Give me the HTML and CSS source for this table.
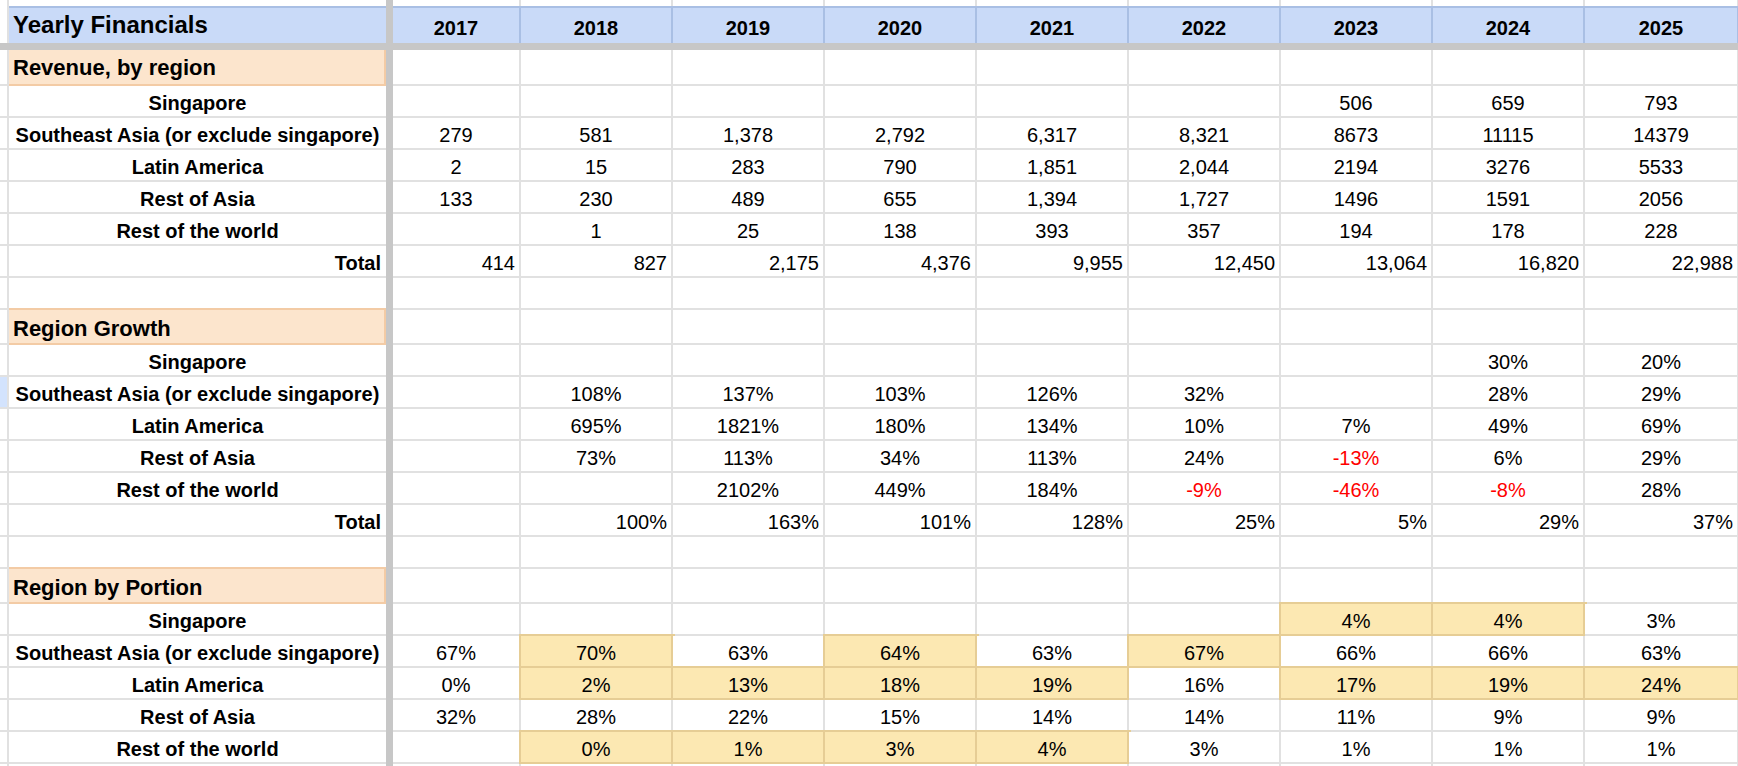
FILE: index.html
```html
<!DOCTYPE html>
<html lang="en">
<head>
<meta charset="utf-8">
<title>Yearly Financials</title>
<link rel="stylesheet" href="styles.css">
</head>
<body>
<div class="sheet">
  <div class="row r0"><div class="c c0"></div><div class="c lab"></div><div class="sep"></div><div class="c y17"></div><div class="c y"></div><div class="c y"></div><div class="c y"></div><div class="c y"></div><div class="c y"></div><div class="c y"></div><div class="c y"></div><div class="c y25"></div></div>
  <div class="row hd"><div class="c c0"></div><div class="c lab">Yearly Financials</div><div class="sep"></div><div class="c y17">2017</div><div class="c y">2018</div><div class="c y">2019</div><div class="c y">2020</div><div class="c y">2021</div><div class="c y">2022</div><div class="c y">2023</div><div class="c y">2024</div><div class="c y25">2025</div></div>
  <div class="hsep"></div>

  <div class="row t first"><div class="c c0"></div><div class="c lab ttl">Revenue, by region</div><div class="sep"></div><div class="c y17"></div><div class="c y"></div><div class="c y"></div><div class="c y"></div><div class="c y"></div><div class="c y"></div><div class="c y"></div><div class="c y"></div><div class="c y25"></div></div>
  <div class="row n"><div class="c c0"></div><div class="c lab">Singapore</div><div class="sep"></div><div class="c y17"></div><div class="c y"></div><div class="c y"></div><div class="c y"></div><div class="c y"></div><div class="c y"></div><div class="c y">506</div><div class="c y">659</div><div class="c y25">793</div></div>
  <div class="row n"><div class="c c0"></div><div class="c lab">Southeast Asia (or exclude singapore)</div><div class="sep"></div><div class="c y17">279</div><div class="c y">581</div><div class="c y">1,378</div><div class="c y">2,792</div><div class="c y">6,317</div><div class="c y">8,321</div><div class="c y">8673</div><div class="c y">11115</div><div class="c y25">14379</div></div>
  <div class="row n"><div class="c c0"></div><div class="c lab">Latin America</div><div class="sep"></div><div class="c y17">2</div><div class="c y">15</div><div class="c y">283</div><div class="c y">790</div><div class="c y">1,851</div><div class="c y">2,044</div><div class="c y">2194</div><div class="c y">3276</div><div class="c y25">5533</div></div>
  <div class="row n"><div class="c c0"></div><div class="c lab">Rest of Asia</div><div class="sep"></div><div class="c y17">133</div><div class="c y">230</div><div class="c y">489</div><div class="c y">655</div><div class="c y">1,394</div><div class="c y">1,727</div><div class="c y">1496</div><div class="c y">1591</div><div class="c y25">2056</div></div>
  <div class="row n"><div class="c c0"></div><div class="c lab">Rest of the world</div><div class="sep"></div><div class="c y17"></div><div class="c y">1</div><div class="c y">25</div><div class="c y">138</div><div class="c y">393</div><div class="c y">357</div><div class="c y">194</div><div class="c y">178</div><div class="c y25">228</div></div>
  <div class="row n tot"><div class="c c0"></div><div class="c lab">Total</div><div class="sep"></div><div class="c y17">414</div><div class="c y">827</div><div class="c y">2,175</div><div class="c y">4,376</div><div class="c y">9,955</div><div class="c y">12,450</div><div class="c y">13,064</div><div class="c y">16,820</div><div class="c y25">22,988</div></div>
  <div class="row n"><div class="c c0"></div><div class="c lab"></div><div class="sep"></div><div class="c y17"></div><div class="c y"></div><div class="c y"></div><div class="c y"></div><div class="c y"></div><div class="c y"></div><div class="c y"></div><div class="c y"></div><div class="c y25"></div></div>

  <div class="row t"><div class="c c0"></div><div class="c lab ttl">Region Growth</div><div class="sep"></div><div class="c y17"></div><div class="c y"></div><div class="c y"></div><div class="c y"></div><div class="c y"></div><div class="c y"></div><div class="c y"></div><div class="c y"></div><div class="c y25"></div></div>
  <div class="row n"><div class="c c0"></div><div class="c lab">Singapore</div><div class="sep"></div><div class="c y17"></div><div class="c y"></div><div class="c y"></div><div class="c y"></div><div class="c y"></div><div class="c y"></div><div class="c y"></div><div class="c y">30%</div><div class="c y25">20%</div></div>
  <div class="row n"><div class="c c0 sel"></div><div class="c lab">Southeast Asia (or exclude singapore)</div><div class="sep"></div><div class="c y17"></div><div class="c y">108%</div><div class="c y">137%</div><div class="c y">103%</div><div class="c y">126%</div><div class="c y">32%</div><div class="c y"></div><div class="c y">28%</div><div class="c y25">29%</div></div>
  <div class="row n"><div class="c c0"></div><div class="c lab">Latin America</div><div class="sep"></div><div class="c y17"></div><div class="c y">695%</div><div class="c y">1821%</div><div class="c y">180%</div><div class="c y">134%</div><div class="c y">10%</div><div class="c y">7%</div><div class="c y">49%</div><div class="c y25">69%</div></div>
  <div class="row n"><div class="c c0"></div><div class="c lab">Rest of Asia</div><div class="sep"></div><div class="c y17"></div><div class="c y">73%</div><div class="c y">113%</div><div class="c y">34%</div><div class="c y">113%</div><div class="c y">24%</div><div class="c y neg">-13%</div><div class="c y">6%</div><div class="c y25">29%</div></div>
  <div class="row n"><div class="c c0"></div><div class="c lab">Rest of the world</div><div class="sep"></div><div class="c y17"></div><div class="c y"></div><div class="c y">2102%</div><div class="c y">449%</div><div class="c y">184%</div><div class="c y neg">-9%</div><div class="c y neg">-46%</div><div class="c y neg">-8%</div><div class="c y25">28%</div></div>
  <div class="row n tot"><div class="c c0"></div><div class="c lab">Total</div><div class="sep"></div><div class="c y17"></div><div class="c y">100%</div><div class="c y">163%</div><div class="c y">101%</div><div class="c y">128%</div><div class="c y">25%</div><div class="c y">5%</div><div class="c y">29%</div><div class="c y25">37%</div></div>
  <div class="row n"><div class="c c0"></div><div class="c lab"></div><div class="sep"></div><div class="c y17"></div><div class="c y"></div><div class="c y"></div><div class="c y"></div><div class="c y"></div><div class="c y"></div><div class="c y"></div><div class="c y"></div><div class="c y25"></div></div>

  <div class="row t"><div class="c c0"></div><div class="c lab ttl">Region by Portion</div><div class="sep"></div><div class="c y17"></div><div class="c y"></div><div class="c y"></div><div class="c y"></div><div class="c y"></div><div class="c y"></div><div class="c y"></div><div class="c y"></div><div class="c y25"></div></div>
  <div class="row n"><div class="c c0"></div><div class="c lab">Singapore</div><div class="sep"></div><div class="c y17"></div><div class="c y"></div><div class="c y"></div><div class="c y"></div><div class="c y"></div><div class="c y"></div><div class="c y hl">4%</div><div class="c y hl">4%</div><div class="c y25">3%</div></div>
  <div class="row n"><div class="c c0"></div><div class="c lab">Southeast Asia (or exclude singapore)</div><div class="sep"></div><div class="c y17">67%</div><div class="c y hl">70%</div><div class="c y">63%</div><div class="c y hl">64%</div><div class="c y">63%</div><div class="c y hl">67%</div><div class="c y">66%</div><div class="c y">66%</div><div class="c y25">63%</div></div>
  <div class="row n"><div class="c c0"></div><div class="c lab">Latin America</div><div class="sep"></div><div class="c y17">0%</div><div class="c y hl">2%</div><div class="c y hl">13%</div><div class="c y hl">18%</div><div class="c y hl">19%</div><div class="c y">16%</div><div class="c y hl">17%</div><div class="c y hl">19%</div><div class="c y25 hl">24%</div></div>
  <div class="row n"><div class="c c0"></div><div class="c lab">Rest of Asia</div><div class="sep"></div><div class="c y17">32%</div><div class="c y">28%</div><div class="c y">22%</div><div class="c y">15%</div><div class="c y">14%</div><div class="c y">14%</div><div class="c y">11%</div><div class="c y">9%</div><div class="c y25">9%</div></div>
  <div class="row n"><div class="c c0"></div><div class="c lab">Rest of the world</div><div class="sep"></div><div class="c y17"></div><div class="c y hl">0%</div><div class="c y hl">1%</div><div class="c y hl">3%</div><div class="c y hl">4%</div><div class="c y">3%</div><div class="c y">1%</div><div class="c y">1%</div><div class="c y25">1%</div></div>
  <div class="row n"><div class="c c0"></div><div class="c lab"></div><div class="sep"></div><div class="c y17"></div><div class="c y"></div><div class="c y"></div><div class="c y"></div><div class="c y"></div><div class="c y"></div><div class="c y"></div><div class="c y"></div><div class="c y25"></div></div>
</div>
</body>
</html>
```
FILE: styles.css
```css
* { box-sizing: border-box; }
html, body { margin: 0; padding: 0; background: #fff; }
body {
  width: 1738px;
  height: 766px;
  overflow: hidden;
  font-family: "Liberation Sans", Arial, sans-serif;
  color: #000;
}
.sheet { display: flex; flex-direction: column; }
.row { display: flex; flex: none; }
.c {
  flex: none;
  background: #fff;
  border-right: 2px solid #e1e1e1;
  border-bottom: 2px solid #e1e1e1;
  white-space: nowrap;
  overflow: hidden;
  text-align: center;
  font-size: 20px;
}
.c0 { width: 9px; }
.lab { width: 377px; border-right: none; font-weight: bold; }
.sep { flex: none; width: 7px; background: #c7c7c7; }
.y17 { width: 128px; }
.y { width: 152px; }
.y25 { width: 154px; }

.r0 { height: 6px; }
.r0 .c { border-bottom: none; }

.hd { height: 37px; }
.hd .c {
  background: #c9daf8;
  border-top: 2px solid #a9bfe4;
  border-right: 2px solid #a9bfe4;
  border-bottom: none;
  font-weight: bold;
  line-height: 22px;
  padding-top: 9px;
}
.hd .c0 { background: #fff; border-top: none; border-right-color: #e1e1e1; }
.hd .lab {
  font-size: 24px;
  line-height: 28px;
  padding-top: 3px;
  padding-left: 4px;
  text-align: left;
  border-right: none;
}
.hsep { flex: none; height: 7px; background: #c7c7c7; }

.n { height: 32px; }
.n .c { line-height: 22px; padding-top: 6px; }

.t { height: 35px; }
.t.first { height: 36px; }
.t .c { line-height: 25px; padding-top: 6px; }
.t.first .c { padding-top: 5px; }
.ttl {
  background: #fce5cd;
  text-align: left;
  padding-left: 4px;
  font-size: 22px;
  border-bottom-color: #f3cba5;
  border-right: 2px solid #f3cba5;
  box-shadow: 0 -2px 0 0 #f3cba5;
}
.t.first .ttl { box-shadow: none; }

.tot .c { text-align: right; padding-right: 4px; }
.tot .lab { padding-right: 5px; }
.neg { color: #ff0000; }
.hl {
  background: #fce8b2;
  border-right-color: #e6cd95;
  border-bottom-color: #e6cd95;
  box-shadow: 0 0 0 2px #e6cd95;
}
.sel { background: #d3e3fd; }
```
